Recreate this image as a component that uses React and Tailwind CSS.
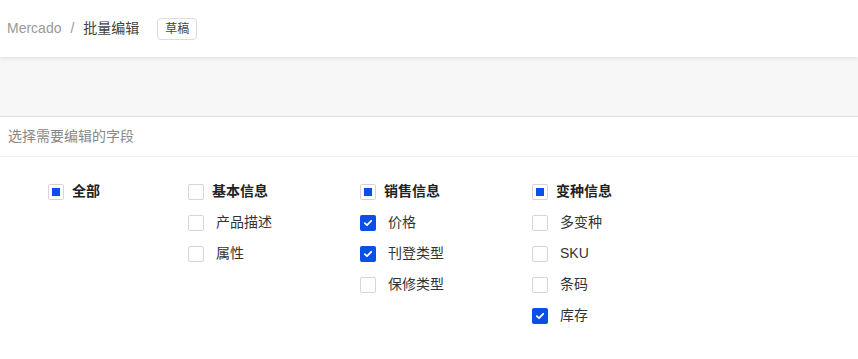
import React from 'react'

const font = { fontFamily: '"Liberation Sans", "Noto Sans CJK SC", sans-serif' }

function Box({ state }) {
  if (state === 'checked') {
    return (
      <span className="flex h-4 w-4 shrink-0 items-center justify-center rounded-[2px] bg-[#0a4fe6]">
        <svg width="10" height="10" viewBox="0 0 10 10" fill="none">
          <path d="M1.8 5.2 L4 7.2 L8.2 2.8" stroke="white" strokeWidth="1.8" strokeLinecap="round" strokeLinejoin="round" />
        </svg>
      </span>
    )
  }
  return (
    <span className="flex h-4 w-4 shrink-0 items-center justify-center rounded-[2px] border border-[#d6d6d6] bg-white">
      {state === 'half' && <span className="h-2 w-2 bg-[#0a4fe6]" />}
    </span>
  )
}

function Item({ state, label, bold }) {
  return (
    <div className="flex h-[31px] items-center">
      <Box state={state} />
      <span
        className={
          bold
            ? 'ml-[8px] text-[14px] font-bold text-[#222]'
            : 'ml-[12px] text-[14px] text-[#333]'
        }
      >
        {label}
      </span>
    </div>
  )
}

const groups = [
  { w: 'w-[140px]', head: ['half', '全部'], items: [] },
  {
    w: 'w-[172px]',
    head: ['none', '基本信息'],
    items: [
      ['none', '产品描述'],
      ['none', '属性'],
    ],
  },
  {
    w: 'w-[172px]',
    head: ['half', '销售信息'],
    items: [
      ['checked', '价格'],
      ['checked', '刊登类型'],
      ['none', '保修类型'],
    ],
  },
  {
    w: 'w-[172px]',
    head: ['half', '变种信息'],
    items: [
      ['none', '多变种'],
      ['none', 'SKU'],
      ['none', '条码'],
      ['checked', '库存'],
    ],
  },
]

export default function App() {
  return (
    <div className="min-h-screen w-full bg-white" style={font}>
      {/* 顶部 */}
      <div className="relative z-10 flex h-[57px] items-center bg-white pl-[7px] shadow-[0_2px_4px_rgba(0,0,0,0.08)]">
        <span className="text-[14px] text-[#999]">Mercado</span>
        <span className="mx-[9px] text-[14px] text-[#999]">/</span>
        <span className="text-[14px] text-[#444]">批量编辑</span>
        <span className="ml-[18px] flex h-[22px] w-[40px] items-center justify-center rounded-[4px] border border-[#dcdcdc] text-[12px] text-[#444]">
          草稿
        </span>
      </div>
      <div className="h-[60px] border-b border-[#dedede] bg-[#f7f7f7]" />
      {/* 字段选择 */}
      <div className="flex h-[40px] items-center border-b border-[#eeeeee] pl-[8px] text-[14px] text-[#888]">
        选择需要编辑的字段
      </div>
      <div className="flex pl-[48px] pt-[19px]">
        {groups.map((g) => (
          <div key={g.head[1]} className={g.w}>
            <Item state={g.head[0]} label={g.head[1]} bold />
            {g.items.map(([s, l]) => (
              <Item key={l} state={s} label={l} />
            ))}
          </div>
        ))}
      </div>
    </div>
  )
}
